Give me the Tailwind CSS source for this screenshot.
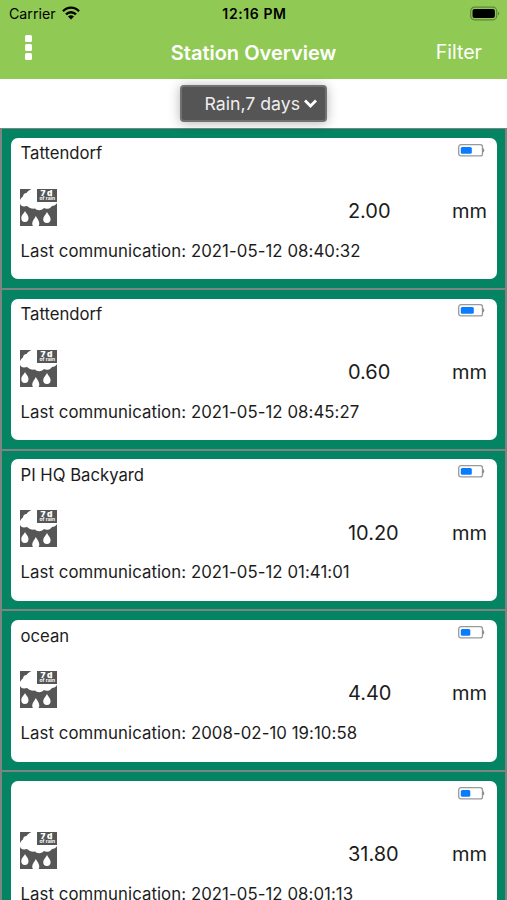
<!DOCTYPE html>
<html lang="en">
<head>
    <meta charset="UTF-8">
    <meta name="viewport" content="width=device-width, initial-scale=1.0">
    <title>Station Overview</title>
    <script src="https://cdn.jsdelivr.net/npm/@tailwindcss/browser@4"></script>
</head>
<body class="h-screen overflow-hidden bg-white font-['Inter',sans-serif] text-[#1c1c1c]">
    <!-- ICONS -->
    <svg class="hidden">
        <symbol id="icon-rain" viewBox="0 0 37 37">
            <rect width="37" height="37" fill="#565656"/>
            <path d="M11.500 0H17V13H37V14C36 16 34 17 32 17C30 20 26 20.500 24 19C21 22 17 21.500 15 19.500C12 20 9 19 7 17C3 18 0 17 0 14V11C1 9 2 8 3 7.500C3 5 5 4 6.500 4C7.500 2 9.500 1 11.500 0Z" fill="#fff"/>
            <path d="M5 22C6 24.500 8.500 26 8.500 29.300A3.600 3.600 0 0 1 1.300 29.300C1.300 26 4 24.500 5 22ZM27 23C28 25.500 30.600 27.500 30.600 30.300A3.700 3.700 0 0 1 23.200 30.300C23.200 27.500 26 25.500 27 23ZM15.800 27C17 29.500 19.300 31.500 19.300 34.500Q19.300 36 18.500 37H13Q12.200 36 12.200 34.500C12.200 31.500 15 29.500 15.800 27Z" fill="#fff"/>
            <text x="20.500" y="7.300" font-size="8" font-weight="900" textLength="12" lengthAdjust="spacingAndGlyphs" fill="#fff">7 d</text>
            <text x="19.500" y="11.300" font-size="4.200" font-weight="700" textLength="15.500" lengthAdjust="spacingAndGlyphs" fill="#fff">of rain</text>
        </symbol>
        <symbol id="icon-battery" viewBox="0 0 27 13">
            <rect x=".7" y=".7" width="23.800" height="11.200" rx="2.200" fill="#fff" stroke="#999" stroke-width="1.300"/>
            <path d="M25.200 4.500Q26.800 6.300 25.200 8.100Z" fill="#777" stroke="#777" stroke-width=".5"/>
        </symbol>
    </svg>

    <!-- HEADER -->
    <header class="h-[79px] bg-[#90ca55]">
        <div class="grid h-[27px] grid-cols-3 items-center pl-[9px] pr-[7px] text-black">
            <div class="flex items-center gap-[6px] text-[14.200px]">
                <span>Carrier</span>
                <svg class="h-[14px] w-[18px]" viewBox="0 0 18 14" fill="none" stroke="#000" stroke-width="2.300">
                    <path d="M1 5.200C5.500.4 12.500.4 17 5.200M4 8.400C6.800 5.500 11.200 5.500 14 8.400"/>
                    <path d="M6 10.500Q9 8 12 10.500L9 13.600Z" fill="#000" stroke="none"/>
                </svg>
            </div>
            <span class="text-center text-[14px] font-semibold tracking-[0.6px]">12:16 PM</span>
            <svg class="h-[15px] w-[30px] justify-self-end" viewBox="0 0 30 15">
                <rect x=".7" y="1.200" width="26" height="12.600" rx="3.800" fill="none" stroke="#5f8638" stroke-width="1.200"/>
                <rect x="2.500" y="3" width="22.400" height="9" rx="2" fill="#000"/>
                <path d="M28 5.500Q30.500 7.500 28 9.500Z" fill="#5f8638"/>
            </svg>
        </div>
        <div class="grid h-[50px] grid-cols-[1fr_auto_1fr] items-center pl-[25px] pr-[25px] text-white">
            <div class="flex flex-col gap-[2px] pb-[9px]">
                <i class="size-[7px] rounded-[1.500px] bg-white"></i>
                <i class="size-[7px] rounded-[1.500px] bg-white"></i>
                <i class="size-[7px] rounded-[1.500px] bg-white"></i>
            </div>
            <h1 class="pt-px text-[20px] font-semibold">Station Overview</h1>
            <span class="justify-self-end pt-[2px] text-[19.600px]">Filter</span>
        </div>
    </header>

    <!-- SENSOR SELECT -->
    <div class="flex h-[49px] items-start justify-center pt-[6px]">
        <button class="flex h-[37px] w-[147px] items-center justify-end gap-1 rounded-[4px] border-2 border-[#717171] bg-[#555] pr-2 text-[17.700px] text-[#eee] shadow-[0_1px_12px_rgba(0,0,0,0.3)]">
            <span class="pt-px">Rain,7 days</span>
            <svg class="h-[9px] w-[13px]" viewBox="0 0 13 9" fill="none" stroke="#fff" stroke-width="2.800"><path d="M1 1.500L6.500 7L12 1.500"/></svg>
        </button>
    </div>

    <!-- STATIONS -->
    <main id="stations" class="border-x-2 border-t border-[#7b8582] bg-[#048463]"></main>

    <script>
        // charge is the width of the battery fill in px
        const stations = [
            { name: 'Tattendorf', value: '2.00', date: '2021-05-12 08:40:32', charge: 11 },
            { name: 'Tattendorf', value: '0.60', date: '2021-05-12 08:45:27', charge: 13 },
            { name: 'PI HQ Backyard', value: '10.20', date: '2021-05-12 01:41:01', charge: 11 },
            { name: 'ocean', value: '4.40', date: '2008-02-10 19:10:58', charge: 9.5 },
            { name: '', value: '31.80', date: '2021-05-12 08:01:13', charge: 9.5 },
        ];

        document.getElementById('stations').innerHTML = stations.map(s => `
            <section class="h-[160.800px] border-b-2 border-[#7b8582] pl-[8.500px] pr-2 pt-[8.800px]">
                <div class="h-[141.600px] rounded-[7px] bg-white px-[10px] pt-[5px]">
                    <div class="flex h-[22px] justify-between">
                        <h2 class="-mt-[0.400px] text-[16.700px] leading-[22px]">${s.name}</h2>
                        <svg class="mr-[2px] mt-[0.800px] h-[13px] w-[27px]" viewBox="0 0 27 13">
                            <use href="#icon-battery"/>
                            <rect x="2.800" y="3" width="${s.charge}" height="6.800" rx="1.500" fill="#087cff"/>
                        </svg>
                    </div>
                    <div class="mt-[23.500px] flex h-[38px] items-center">
                        <svg class="-ml-[0.600px] size-[37px]"><use href="#icon-rain"/></svg>
                        <span class="ml-[291px] flex-1 pt-[7.600px] text-[20px]">${s.value}</span>
                        <span class="pt-[7.600px] text-[20px]">mm</span>
                    </div>
                    <p class="mt-[13.600px] text-[16.800px] leading-[22px] tracking-[0.060px]">Last communication: ${s.date}</p>
                </div>
            </section>`).join('');
    </script>
</body>
</html>
